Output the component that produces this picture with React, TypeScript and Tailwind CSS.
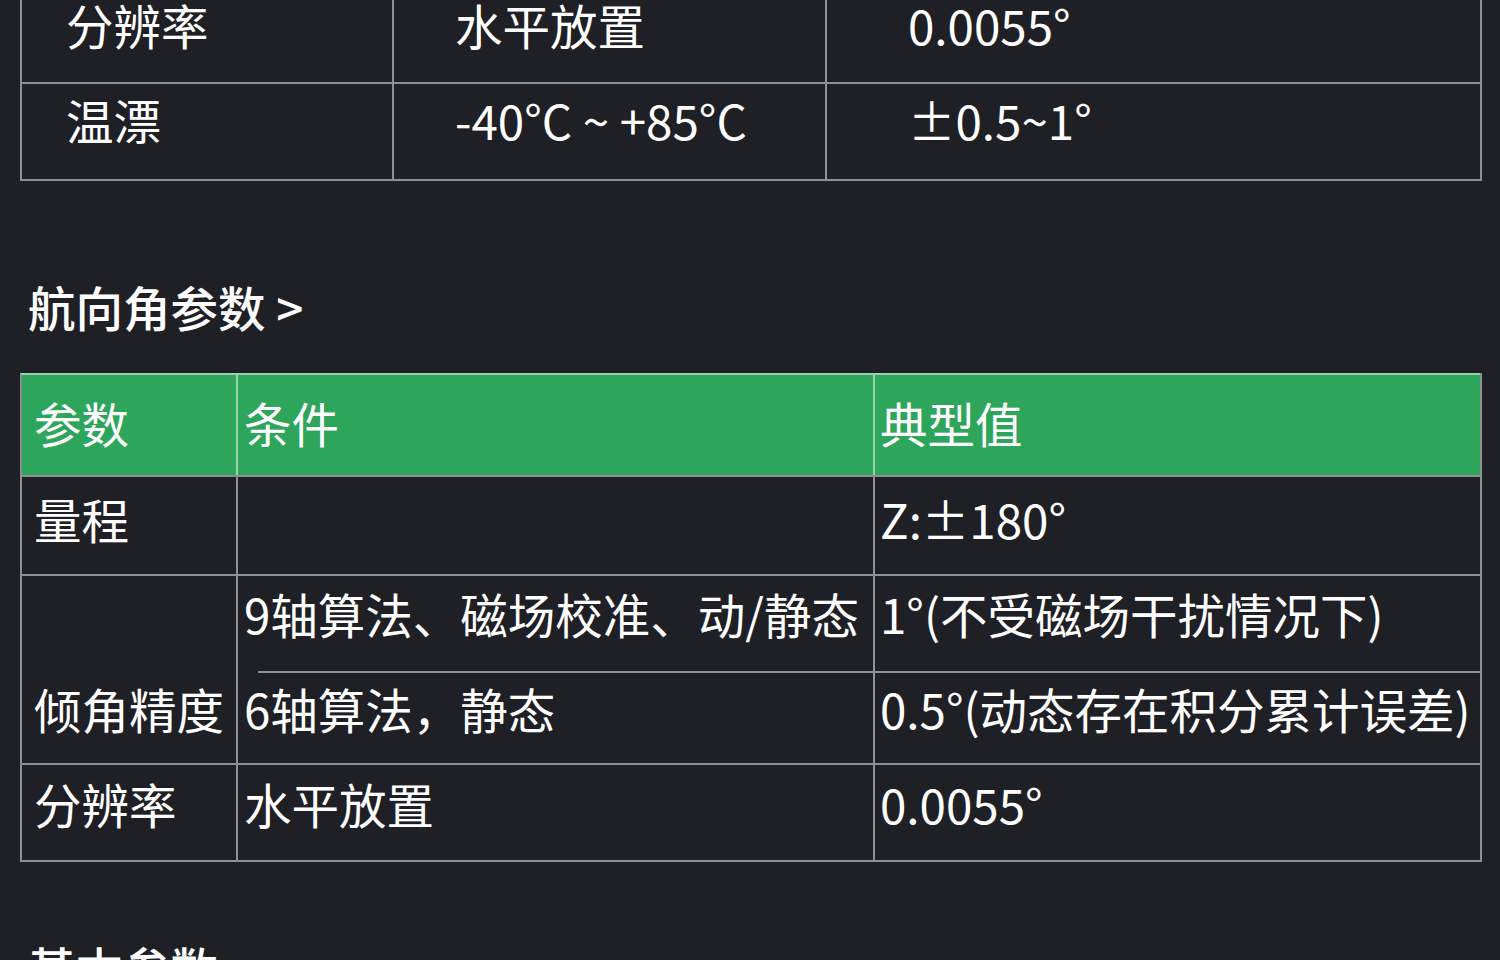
import React from 'react';

// Spec sheet section: tilt/heading parameter tables on a dark page

const line = 'border-white/50';

function Cell({
  children,
  className = '',
}: {
  children?: React.ReactNode;
  className?: string;
}) {
  return (
    <div className={`border-t-2 border-l-2 ${line} whitespace-nowrap ${className}`}>
      {children}
    </div>
  );
}

function TopTable() {
  return (
    <div
      className={`-mt-[13px] ml-[20px] grid w-[1462px] grid-cols-[372px_433px_655px] grid-rows-[95px_97px] border-r-2 border-b-2 ${line}`}
    >
      <Cell className="pl-[44px] pt-[12px]">分辨率</Cell>
      <Cell className="pl-[61px] pt-[12px]">水平放置</Cell>
      <Cell className="pl-[81px] pt-[12px]">0.0055°</Cell>
      <Cell className="pl-[44px] pt-[12px]">温漂</Cell>
      <Cell className="pl-[61px] pt-[12px]">-40°C ~ +85°C</Cell>
      <Cell className="pl-[81px] pt-[12px]">±0.5~1°</Cell>
    </div>
  );
}

function HeadingTable() {
  return (
    <div
      className={`ml-[20px] grid w-[1462px] grid-cols-[216px_637px_607px] grid-rows-[102px_99px_97px_92px_97px] border-r-2 border-b-2 ${line}`}
    >
      {/* header */}
      <Cell className="border-l-[#8e8f92] bg-[#2da65b] pl-[12px] pt-[24px]">参数</Cell>
      <Cell className="bg-[#2da65b] pl-[6px] pt-[24px]">条件</Cell>
      <Cell className="bg-[#2da65b] pl-[5px] pt-[24px]">典型值</Cell>

      <Cell className="pl-[12px] pt-[18px]">量程</Cell>
      <Cell />
      <Cell className="pl-[5px] pt-[18px]">Z:±180°</Cell>

      <Cell className="row-span-2 pl-[12px] pt-[109px]">倾角精度</Cell>
      <Cell className="pl-[6px] pt-[14px]">9轴算法、磁场校准、动/静态</Cell>
      <Cell className="pl-[5px] pt-[14px]">1°(不受磁场干扰情况下)</Cell>
      <div className={`flex flex-col border-l-2 ${line}`}>
        <div className="ml-[20px] h-[2px] bg-white/50" />
        <div className="pl-[6px] pt-[12px]">6轴算法，静态</div>
      </div>
      <Cell className="pl-[5px] pt-[12px]">0.5°(动态存在积分累计误差)</Cell>

      <Cell className="pl-[12px] pt-[15px]">分辨率</Cell>
      <Cell className="pl-[6px] pt-[15px]">水平放置</Cell>
      <Cell className="pl-[5px] pt-[15px]">0.0055°</Cell>
    </div>
  );
}

export default function App() {
  return (
    <div className="h-[960px] w-[1500px] overflow-hidden bg-[#1f2025] font-['Noto_Sans_CJK_SC',sans-serif] text-[47.5px] leading-[48px] text-white">
      <TopTable />

      <h2 className="ml-[28px] mt-[102px] font-medium">航向角参数 &gt;</h2>

      <div className="mt-[42px]">
        <HeadingTable />
      </div>

      <h2 className="ml-[28px] mt-[82px] font-medium">基本参数</h2>
    </div>
  );
}
